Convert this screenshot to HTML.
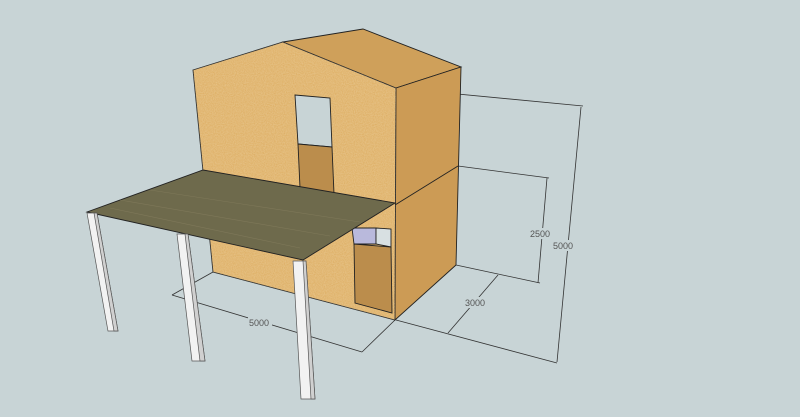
<!DOCTYPE html>
<html><head><meta charset="utf-8"><style>
html,body{margin:0;padding:0;background:#c8d4d6;}
svg{display:block}
text{font-family:"Liberation Sans",sans-serif;font-size:9px;fill:#555;}
</style></head><body>
<svg width="800" height="417" viewBox="0 0 800 417" xmlns="http://www.w3.org/2000/svg">
<defs>
<filter id="grain" x="0" y="0" width="100%" height="100%">
<feTurbulence type="fractalNoise" baseFrequency="0.9" numOctaves="2" seed="3"/>
<feColorMatrix type="matrix" values="0 0 0 0 1  0 0 0 0 0.95  0 0 0 0 0.8  0 0 0 0.35 0"/>
<feComposite in2="SourceGraphic" operator="in"/>
</filter>
</defs>
<rect width="800" height="417" fill="#c8d4d6"/>
<g stroke="#333" stroke-width="0.8" fill="none">
<polyline points="395,88 583,106"/>
<line x1="581" y1="107" x2="557" y2="362"/>
<polyline points="396,320 557,363"/>
<line x1="458" y1="166" x2="549" y2="178"/>
<line x1="547" y1="178" x2="538" y2="283"/>
<line x1="456" y1="265" x2="540" y2="283"/>
<line x1="498" y1="275" x2="448" y2="333"/>
<line x1="172" y1="295" x2="362" y2="352"/>
<line x1="362" y1="352" x2="395" y2="320"/>
<line x1="172" y1="295" x2="213" y2="272"/>
</g>
<g stroke="#222" stroke-width="0.9">
<polygon points="193,70 283,42 396,88 395,320 213,272" fill="#dcab5e"/>
<polygon points="283,42 363,29 461,67 396,88" fill="#cfa05a"/>
<polygon points="396,88 461,67 456,265 395,320" fill="#cc9b55"/>
<polygon points="193,70 283,42 396,88 395,320 213,272" fill="#dcab5e" filter="url(#grain)" stroke="none"/>
<line x1="395" y1="205" x2="458" y2="166"/>
<polygon points="295,95 330,98 332,147 298,144" fill="#c8d4d6"/>
<polygon points="298,144 332,147 334,194 300,188" fill="#bb8d4c"/>
<polygon points="352,228 376,228 376,244 354,244" fill="#b9b9dc"/>
<polygon points="376,228 391,229 391,247 376,244" fill="#d8e0e2"/>
<polygon points="354,244 391,247 392,313 355,303" fill="#bb8d4c"/>
</g>
<polygon points="203,170 395,203 303,260 87,212" fill="#6e6a4c" stroke="#222" stroke-width="0.9"/>
<g stroke="#8a8262" stroke-width="0.6" opacity="0.6">
<line x1="120" y1="200" x2="330" y2="236"/>
<line x1="150" y1="190" x2="360" y2="222"/>
<line x1="110" y1="208" x2="300" y2="248"/>
</g>
<g stroke="#555" stroke-width="0.7">
<polygon points="87,213 97,213 118,331 108,331" fill="#f2f2f2"/>
<polygon points="94,213 97,213 118,331 114,331" fill="#d0d0d0"/>
<polygon points="177,234 188,234 205,361 192,361" fill="#f2f2f2"/>
<polygon points="185,234 188,234 205,361 200,361" fill="#d0d0d0"/>
<polygon points="293,261 306,261 315,399 301,399" fill="#f2f2f2"/>
<polygon points="303,261 306,261 315,399 311,399" fill="#d0d0d0"/>
</g>
<rect x="552" y="240" width="24" height="11" fill="#c8d4d6"/>
<text x="553" y="249">5000</text>
<rect x="529" y="228" width="24" height="11" fill="#c8d4d6"/>
<text x="530" y="237">2500</text>
<rect x="464" y="297" width="24" height="11" fill="#c8d4d6"/>
<text x="465" y="306">3000</text>
<rect x="248" y="317" width="24" height="11" fill="#c8d4d6"/>
<text x="249" y="326">5000</text>
</svg>
</body></html>
